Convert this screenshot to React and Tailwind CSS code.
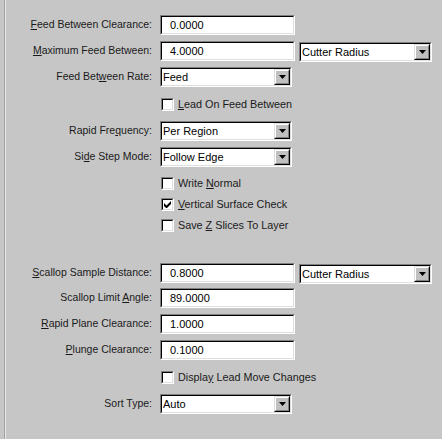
import React from 'react';

// Mnemonic label: underline one character by index
const Mn = ({ text, u }) => {
  if (u === undefined || u < 0) return <>{text}</>;
  return (
    <>
      {text.slice(0, u)}
      <span className="underline underline-offset-[1px]">{text[u]}</span>
      {text.slice(u + 1)}
    </>
  );
};

const Sunken = ({ className = '', children }) => (
  <div className={`border-t border-l border-t-[#808080] border-l-[#808080] border-b border-r border-b-white border-r-white ${className}`}>
    <div className="h-full w-full border-t border-l border-t-black border-l-black border-b border-r border-b-[#dfdfdf] border-r-[#dfdfdf] bg-white flex items-center">
      {children}
    </div>
  </div>
);

const ArrowButton = () => (
  <div className="h-full w-[16px] border-t border-l border-t-[#dfdfdf] border-l-[#dfdfdf] border-b border-r border-b-black border-r-black">
    <div className="h-full w-full border-t border-l border-t-white border-l-white border-b border-r border-b-[#808080] border-r-[#808080] bg-[#c0c0c0] flex items-center justify-center">
      <svg width="7" height="4" viewBox="0 0 7 4">
        <path d="M0 0h7L3.5 4z" fill="#000" />
      </svg>
    </div>
  </div>
);

const TextInput = ({ value }) => (
  <Sunken className="w-[135px] h-[20px]">
    <span className="pl-[8px]">{value}</span>
  </Sunken>
);

const Select = ({ value, width = 'w-[132px]' }) => (
  <Sunken className={`${width} h-[20px]`}>
    <span className="pl-[1px] flex-1">{value}</span>
    <div className="h-full">
      <ArrowButton />
    </div>
  </Sunken>
);

const Checkbox = ({ checked }) => (
  <div className="w-[13px] h-[13px] border-t border-l border-t-[#808080] border-l-[#808080] border-b border-r border-b-white border-r-white">
    <div className="h-full w-full border-t border-l border-t-black border-l-black border-b border-r border-b-[#dfdfdf] border-r-[#dfdfdf] bg-white flex items-center justify-center">
      {checked && (
        <svg width="7" height="7" viewBox="0 0 7 7">
          <path d="M0 2v3l2 2h1l4-4V0L2.5 4.5z" fill="#000" />
        </svg>
      )}
    </div>
  </div>
);

const Row = ({ label, u, mt, children }) => (
  <div className={`flex items-center h-[20px] ${mt}`}>
    <div className="w-[152px] text-right whitespace-nowrap text-[10.5px] text-[#1a1a1a]">
      {label && <Mn text={label} u={u} />}
    </div>
    <div className="ml-[8px] flex items-center">{children}</div>
  </div>
);

const CheckRow = ({ label, u, checked, mt }) => (
  <div className={`flex items-center h-[20px] ${mt}`}>
    <div className="w-[161px]" />
    <Checkbox checked={checked} />
    <span className="ml-[4px] whitespace-nowrap text-[10.8px] text-[#1a1a1a]"><Mn text={label} u={u} /></span>
  </div>
);

export default function App() {
  return (
    <div
      className="w-[442px] h-[439px] bg-[#c6c6c6] text-black text-[11px] flex"
      style={{ fontFamily: '"Liberation Sans", Arial, sans-serif' }}
    >
      <div className="w-[4px]" />
      <div className="w-[1px] bg-[#a2a2a2]" />
      <div className="w-[1px] bg-[#e6e6e6]" />
      <div className="flex flex-col pt-[15px] -ml-[6px]">
        <Row label="Feed Between Clearance:" u={0} mt="mt-0">
          <TextInput value="0.0000" />
        </Row>
        <Row label="Maximum Feed Between:" u={0} mt="mt-[6px]">
          <TextInput value="4.0000" />
          <div className="ml-[4px] mt-[2px]">
            <Select value="Cutter Radius" width="w-[133px]" />
          </div>
        </Row>
        <Row label="Feed Between Rate:" u={8} mt="mt-[6px]">
          <Select value="Feed" />
        </Row>
        <CheckRow label="Lead On Feed Between" u={0} mt="mt-[7px]" />
        <Row label="Rapid Frequency:" u={9} mt="mt-[7px]">
          <Select value="Per Region" />
        </Row>
        <Row label="Side Step Mode:" u={2} mt="mt-[6px]">
          <Select value="Follow Edge" />
        </Row>
        <CheckRow label="Write Normal" u={6} mt="mt-[6px]" />
        <CheckRow label="Vertical Surface Check" u={0} checked mt="mt-[1px]" />
        <CheckRow label="Save Z Slices To Layer" u={5} mt="mt-[1px]" />
        <Row label="Scallop Sample Distance:" u={0} mt="mt-[28px]">
          <TextInput value="0.8000" />
          <div className="ml-[4px] mt-[2px]">
            <Select value="Cutter Radius" width="w-[133px]" />
          </div>
        </Row>
        <Row label="Scallop Limit Angle:" u={14} mt="mt-[5px]">
          <TextInput value="89.0000" />
        </Row>
        <Row label="Rapid Plane Clearance:" u={0} mt="mt-[6px]">
          <TextInput value="1.0000" />
        </Row>
        <Row label="Plunge Clearance:" u={0} mt="mt-[6px]">
          <TextInput value="0.1000" />
        </Row>
        <CheckRow label="Display Lead Move Changes" u={6} mt="mt-[7px]" />
        <Row label="Sort Type:" mt="mt-[7px]">
          <Select value="Auto" />
        </Row>
      </div>
    </div>
  );
}
